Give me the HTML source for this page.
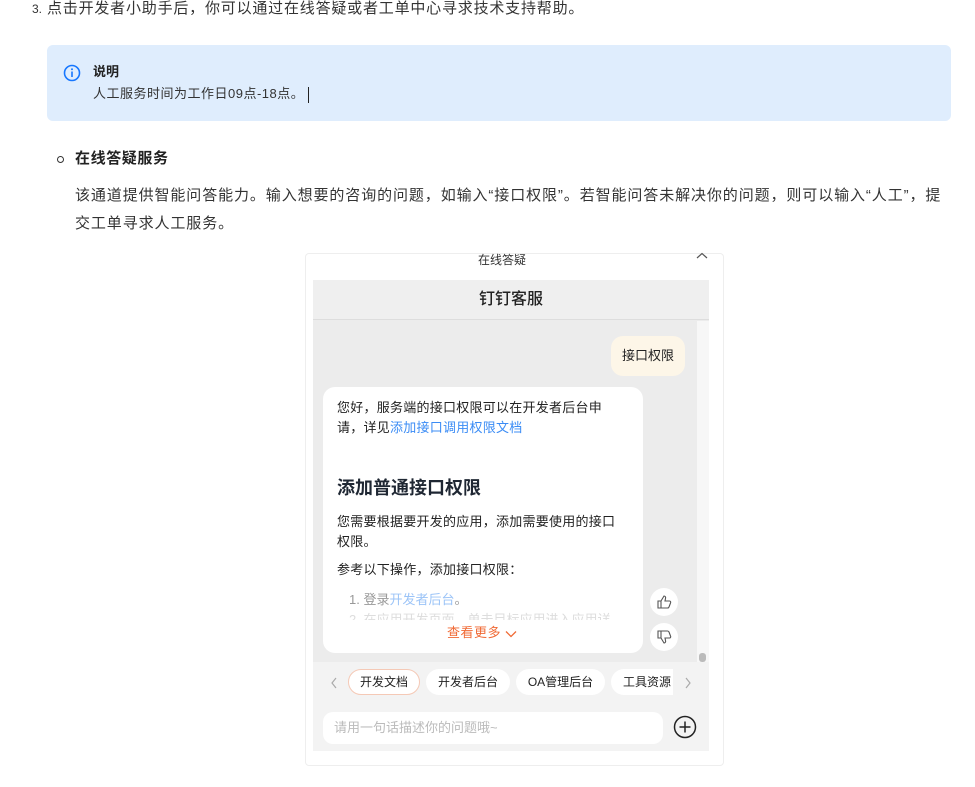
<!DOCTYPE html>
<html><head><meta charset="utf-8"><style>
*{margin:0;padding:0;box-sizing:border-box}
body{width:975px;height:787px;background:#fff;font-family:"Liberation Sans","Noto Sans CJK SC",sans-serif;color:#333;position:relative;overflow:hidden}
.a{position:absolute;white-space:nowrap}
</style></head><body>
<div class="a" style="left:32px;top:-1px;font-size:15px;line-height:20px;letter-spacing:0.8px"><span style="font-size:12px;letter-spacing:0">3.</span> 点击开发者小助手后，你可以通过在线答疑或者工单中心寻求技术支持帮助。</div>
<div class="a" style="left:47px;top:45px;width:904px;height:76px;background:#dfedfd;border-radius:6px"></div>
<svg class="a" style="left:63px;top:64px" width="18" height="18" viewBox="0 0 18 18"><circle cx="9" cy="9" r="7.5" fill="none" stroke="#1677ff" stroke-width="1.6"/><rect x="8.2" y="7.5" width="1.6" height="5.5" fill="#1677ff"/><circle cx="9" cy="5.3" r="1" fill="#1677ff"/></svg>
<div class="a" style="left:93px;top:63px;font-size:13px;font-weight:bold;line-height:18px;color:#222">说明</div>
<div class="a" style="left:93px;top:85px;font-size:13px;line-height:18px;letter-spacing:0.5px">人工服务时间为工作日09点-18点。<span style="display:inline-block;width:1px;height:16px;background:#222;vertical-align:middle;margin-left:4px"></span></div>
<div class="a" style="left:57px;top:156px;width:7px;height:7px;border:1.3px solid #333;border-radius:50%"></div>
<div class="a" style="left:75px;top:149px;font-size:15px;font-weight:bold;line-height:20px;color:#222;letter-spacing:0.6px">在线答疑服务</div>
<div class="a" style="left:75px;top:182px;font-size:15px;line-height:28px;letter-spacing:0.9px">该通道提供智能问答能力。输入想要的咨询的问题，如输入“接口权限”。若智能问答未解决你的问题，则可以输入“人工”，提<br>交工单寻求人工服务。</div>

<div class="a" style="left:305px;top:253px;width:419px;height:513px;background:#fff;border:1px solid #eee;border-radius:4px"></div>
<div class="a" style="left:478px;top:253px;font-size:12px;line-height:14px;color:#333">在线答疑</div>
<svg class="a" style="left:696px;top:252px" width="12" height="8"><path d="M1 6 L6 1.5 L11 6" fill="none" stroke="#555" stroke-width="1.2"/></svg>
<div class="a" style="left:313px;top:280px;width:396px;height:471px;background:#ececec"></div>
<div class="a" style="left:313px;top:280px;width:396px;height:40px;background:#efefef;border-bottom:1px solid #ddd;text-align:center;font-size:16px;line-height:40px;font-weight:500;color:#222">钉钉客服</div>
<div class="a" style="left:697px;top:321px;width:12px;height:341px;background:#f7f7f7"></div>
<div class="a" style="left:699px;top:653px;width:7px;height:9px;background:#bbb;border-radius:3px"></div>
<div class="a" style="left:611px;top:336px;width:74px;height:40px;background:#fdf6e8;border-radius:12px;font-size:13px;line-height:40px;text-align:center;color:#222">接口权限</div>
<div class="a" style="left:323px;top:387px;width:320px;height:266px;background:#fff;border-radius:12px"></div>
<div class="a" style="left:337px;top:398px;font-size:13px;line-height:20px;color:#222;letter-spacing:0.25px">您好，服务端的接口权限可以在开发者后台申<br>请，详见<span style="color:#3b8cf5">添加接口调用权限文档</span></div>
<div class="a" style="left:337px;top:476px;font-size:18px;line-height:24px;font-weight:bold;color:#1f2733">添加普通接口权限</div>
<div class="a" style="left:337px;top:512px;font-size:13px;line-height:20px;color:#222;letter-spacing:0.25px">您需要根据要开发的应用，添加需要使用的接口<br>权限。</div>
<div class="a" style="left:337px;top:560px;font-size:13px;line-height:20px;color:#222;letter-spacing:0.25px">参考以下操作，添加接口权限：</div>
<div class="a" style="left:349px;top:590px;font-size:13px;line-height:20px;color:#999">1. 登录<span style="color:#9cc4f7">开发者后台</span>。</div>
<div class="a" style="left:349px;top:610px;font-size:13px;line-height:20px;color:#ddd;height:10px;overflow:hidden">2. 在应用开发页面，单击目标应用进入应用详</div>
<div class="a" style="left:447px;top:623px;font-size:13px;line-height:20px;color:#f06a35;letter-spacing:0.5px">查看更多 <svg width="12" height="8" style="vertical-align:middle"><path d="M1 1.5 L6 6.5 L11 1.5" fill="none" stroke="#f06a35" stroke-width="1.3"/></svg></div>
<div class="a" style="left:650px;top:588px;width:28px;height:28px;background:#fff;border-radius:50%"></div>
<div class="a" style="left:650px;top:623px;width:28px;height:28px;background:#fff;border-radius:50%"></div>
<svg class="a" style="left:656px;top:594px" width="16" height="16" viewBox="0 0 16 16"><path d="M2 7h3v7H2z M5 7l3-5c1 0 2 1 1.5 2.5L9 7h4.5c1 0 1.5 1 1 2l-1.5 4c-.3.7-1 1-1.5 1H5" fill="none" stroke="#555" stroke-width="1.1"/></svg>
<svg class="a" style="left:656px;top:629px" width="16" height="16" viewBox="0 0 16 16"><g transform="matrix(1 0 0 -1 0 16)"><path d="M2 7h3v7H2z M5 7l3-5c1 0 2 1 1.5 2.5L9 7h4.5c1 0 1.5 1 1 2l-1.5 4c-.3.7-1 1-1.5 1H5" fill="none" stroke="#555" stroke-width="1.1"/></g></svg>
<div class="a" style="left:313px;top:662px;width:396px;height:89px;background:#f3f3f3"></div>
<svg class="a" style="left:330px;top:677px" width="8" height="12"><path d="M6 1 L2 6 L6 11" fill="none" stroke="#aaa" stroke-width="1.2"/></svg>
<svg class="a" style="left:684px;top:677px" width="8" height="12"><path d="M2 1 L6 6 L2 11" fill="none" stroke="#aaa" stroke-width="1.2"/></svg>
<div class="a" style="left:348px;top:669px;width:72px;height:26px;background:#fff;border:1px solid #f5c9b6;border-radius:13px;font-size:12px;line-height:24px;text-align:center;color:#222">开发文档</div>
<div class="a" style="left:426px;top:669px;width:84px;height:26px;background:#fff;border-radius:13px;font-size:12px;line-height:26px;text-align:center;color:#222">开发者后台</div>
<div class="a" style="left:516px;top:669px;width:89px;height:26px;background:#fff;border-radius:13px;font-size:12px;line-height:26px;text-align:center;color:#222">OA管理后台</div>
<div class="a" style="left:611px;top:669px;width:62px;height:26px;background:#fff;border-radius:13px 0 0 13px;font-size:12px;line-height:26px;padding-left:12px;color:#222;overflow:hidden">工具资源</div>
<div class="a" style="left:323px;top:712px;width:340px;height:32px;background:#fff;border-radius:10px;font-size:13px;line-height:32px;padding-left:11px;color:#bbb">请用一句话描述你的问题哦~</div>
<svg class="a" style="left:673px;top:715px" width="24" height="24"><circle cx="12" cy="12" r="10.5" fill="none" stroke="#222" stroke-width="1.5"/><path d="M12 6.5v11M6.5 12h11" stroke="#222" stroke-width="1.5"/></svg>
</body></html>
